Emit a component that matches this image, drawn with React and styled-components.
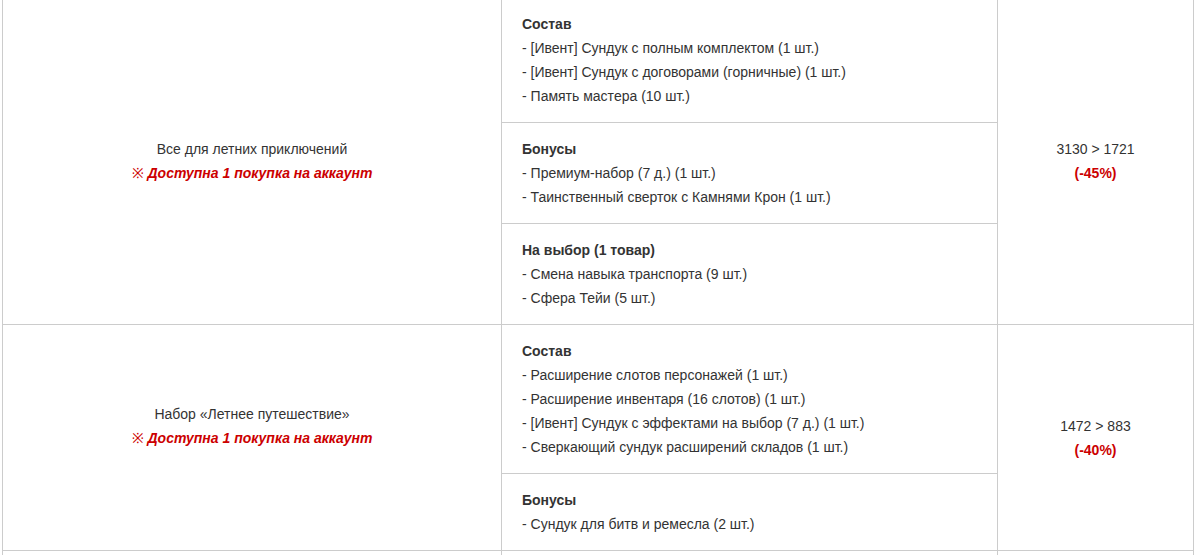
import styled, { createGlobalStyle } from "styled-components";

const GlobalStyle = createGlobalStyle`
  html,
  body {
    margin: 0;
    padding: 0;
    overflow: hidden;
    background: #fff;
  }

  body {
    font-family: "Liberation Sans", Arial, sans-serif;
    font-size: 14px;
    line-height: 24px;
    color: #333;
  }
`;

const TableWrap = styled.div`
  margin: -3px 0 0 2px;
  width: 1192px;
  border-top: 1px solid #ccc;
`;

const Row = styled.div`
  display: grid;
  grid-template-columns: 499px 496px 197px;
  border-bottom: 1px solid #ccc;
  min-height: ${(p) => p.$minHeight || 0}px;
`;

const NameCell = styled.div`
  display: flex;
  flex-direction: column;
  justify-content: center;
  align-items: center;
  text-align: center;
  border-left: 1px solid #ccc;
`;

const ContentCell = styled.div`
  display: flex;
  flex-direction: column;
  border-left: 1px solid #ccc;
`;

const PriceCell = styled.div`
  display: flex;
  flex-direction: column;
  justify-content: center;
  align-items: center;
  text-align: center;
  border-left: 1px solid #ccc;
  border-right: 1px solid #ccc;
`;

const Section = styled.div`
  padding: 14px 20px;

  & + & {
    border-top: 1px solid #ccc;
  }
`;

const SectionTitle = styled.div`
  font-weight: 700;
`;

const Item = styled.div``;

const Limit = styled.div`
  color: #c00;
  font-weight: 700;
  font-style: italic;

  span {
    font-weight: 400;
    font-style: normal;
  }
`;

const Discount = styled.div`
  color: #c00;
  font-weight: 700;
`;

const Spacer = styled.div`
  height: 24px;
`;

const bundles = [
  {
    name: "Все для летних приключений",
    trailing: false,
    price: "3130 > 1721",
    discount: "(-45%)",
    sections: [
      {
        title: "Состав",
        items: [
          "[Ивент] Сундук с полным комплектом (1 шт.)",
          "[Ивент] Сундук с договорами (горничные) (1 шт.)",
          "Память мастера (10 шт.)",
        ],
      },
      {
        title: "Бонусы",
        items: [
          "Премиум-набор (7 д.) (1 шт.)",
          "Таинственный сверток с Камнями Крон (1 шт.)",
        ],
      },
      {
        title: "На выбор (1 товар)",
        items: ["Смена навыка транспорта (9 шт.)", "Сфера Тейи (5 шт.)"],
      },
    ],
  },
  {
    name: "Набор «Летнее путешествие»",
    trailing: true,
    price: "1472 > 883",
    discount: "(-40%)",
    sections: [
      {
        title: "Состав",
        items: [
          "Расширение слотов персонажей (1 шт.)",
          "Расширение инвентаря (16 слотов) (1 шт.)",
          "[Ивент] Сундук с эффектами на выбор (7 д.) (1 шт.)",
          "Сверкающий сундук расширений складов (1 шт.)",
        ],
      },
      {
        title: "Бонусы",
        items: ["Сундук для битв и ремесла (2 шт.)"],
      },
    ],
  },
];

function App() {
  return (
    <>
      <GlobalStyle />
      <TableWrap>
        {bundles.map((b) => (
          <Row key={b.name}>
            <NameCell>
              <div>{b.name}</div>
              <Limit>
                <span>※</span> Доступна 1 покупка на аккаунт
              </Limit>
              {b.trailing && <Spacer />}
            </NameCell>
            <ContentCell>
              {b.sections.map((s) => (
                <Section key={s.title}>
                  <SectionTitle>{s.title}</SectionTitle>
                  {s.items.map((it) => (
                    <Item key={it}>- {it}</Item>
                  ))}
                </Section>
              ))}
            </ContentCell>
            <PriceCell>
              <div>{b.price}</div>
              <Discount>{b.discount}</Discount>
            </PriceCell>
          </Row>
        ))}
        <Row $minHeight={120}>
          <NameCell />
          <ContentCell />
          <PriceCell />
        </Row>
      </TableWrap>
    </>
  );
}

export default App;
